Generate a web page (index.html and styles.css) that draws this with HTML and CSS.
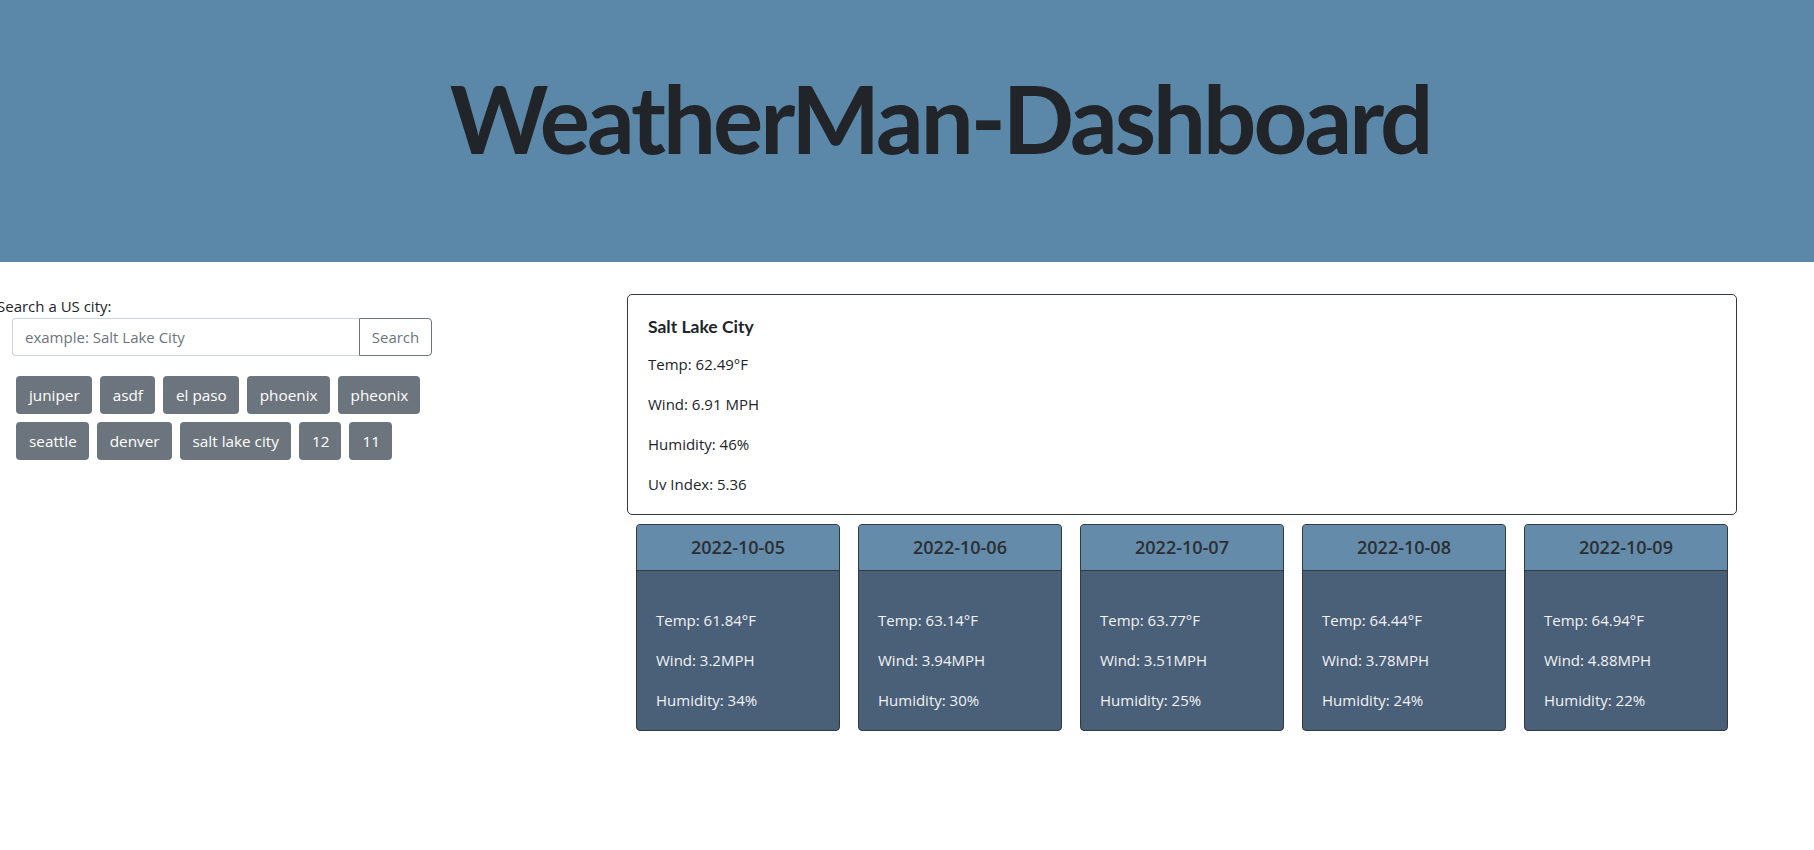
FILE: index.html
```html
<!DOCTYPE html>
<html lang="en">
<head>
<meta charset="utf-8">
<title>WeatherMan-Dashboard</title>
<link rel="stylesheet" href="styles.css">
</head>
<body>
<header class="hero">
  <h1 class="hero-title">WeatherMan-Dashboard</h1>
</header>
<main class="layout">
  <aside class="sidebar">
    <label class="search-label" for="city">Search a US city:</label>
    <div class="search-group">
      <input id="city" class="search-input" type="text" placeholder="example: Salt Lake City">
      <button class="search-btn" type="button">Search</button>
    </div>
    <div class="history">
      <button class="history-btn" type="button">juniper</button>
      <button class="history-btn" type="button">asdf</button>
      <button class="history-btn" type="button">el paso</button>
      <button class="history-btn" type="button">phoenix</button>
      <button class="history-btn" type="button">pheonix</button>
      <button class="history-btn" type="button">seattle</button>
      <button class="history-btn" type="button">denver</button>
      <button class="history-btn" type="button">salt lake city</button>
      <button class="history-btn" type="button">12</button>
      <button class="history-btn" type="button">11</button>
    </div>
  </aside>
  <section class="weather">
    <div class="current">
      <h5 class="current-title">Salt Lake City</h5>
      <p class="stat">Temp: 62.49°F</p>
      <p class="stat">Wind: 6.91 MPH</p>
      <p class="stat">Humidity: 46%</p>
      <p class="stat last">Uv Index: 5.36</p>
    </div>
    <div class="forecast">
      <div class="day">
        <div class="day-head">2022-10-05</div>
        <div class="day-body">
          <p class="stat">Temp: 61.84°F</p>
          <p class="stat">Wind: 3.2MPH</p>
          <p class="stat last">Humidity: 34%</p>
        </div>
      </div>
      <div class="day">
        <div class="day-head">2022-10-06</div>
        <div class="day-body">
          <p class="stat">Temp: 63.14°F</p>
          <p class="stat">Wind: 3.94MPH</p>
          <p class="stat last">Humidity: 30%</p>
        </div>
      </div>
      <div class="day">
        <div class="day-head">2022-10-07</div>
        <div class="day-body">
          <p class="stat">Temp: 63.77°F</p>
          <p class="stat">Wind: 3.51MPH</p>
          <p class="stat last">Humidity: 25%</p>
        </div>
      </div>
      <div class="day">
        <div class="day-head">2022-10-08</div>
        <div class="day-body">
          <p class="stat">Temp: 64.44°F</p>
          <p class="stat">Wind: 3.78MPH</p>
          <p class="stat last">Humidity: 24%</p>
        </div>
      </div>
      <div class="day">
        <div class="day-head">2022-10-09</div>
        <div class="day-body">
          <p class="stat">Temp: 64.94°F</p>
          <p class="stat">Wind: 4.88MPH</p>
          <p class="stat last">Humidity: 22%</p>
        </div>
      </div>
    </div>
  </section>
</main>
</body>
</html>
```
FILE: styles.css
```css
* { box-sizing: border-box; }
html, body { margin: 0; padding: 0; }
body {
  font-family: "Open Sans", "Noto Sans", sans-serif;
  font-size: 16px;
  line-height: 24px;
  color: #212529;
  background: #fff;
  overflow: hidden;
}
.hero {
  height: 262px;
  background: #5b88a8;
  display: flex;
  align-items: flex-start;
  justify-content: center;
  padding-left: 66px;
}
.hero-title {
  margin: 58px 0 0 0;
  font-family: Lato, sans-serif;
  font-weight: 700;
  font-size: 94px;
  line-height: 120px;
  letter-spacing: -3px;
  color: #212529;
}
.layout {
  display: flex;
  align-items: flex-start;
}
.sidebar {
  width: 627px;
  padding-top: 32px;
}
.search-label {
  display: block;
  margin-left: -3px;
  font-size: 15px;
  line-height: 24px;
}
.search-group {
  display: flex;
  margin: 0 0 16px 12px;
  width: 420px;
}
.search-input {
  width: 347px;
  height: 38px;
  padding: 6px 12px;
  border: 1px solid #ced4da;
  border-right: none;
  border-radius: 4px 0 0 4px;
  font-family: inherit;
  font-size: 15px;
  color: #495057;
}
.search-input::placeholder { color: #6c757d; }
.search-btn {
  width: 73px;
  height: 38px;
  border: 1px solid #6c757d;
  border-radius: 0 4px 4px 0;
  background: #fff;
  color: #6c757d;
  font-family: inherit;
  font-size: 15px;
  padding: 0;
}
.history {
  display: flex;
  flex-wrap: wrap;
  width: 430px;
  margin-left: 12px;
}
.history-btn {
  margin: 4px;
  height: 38px;
  padding: 0 12px 0 13px;
  border: none;
  border-radius: 4px;
  background: #6c757d;
  color: #fff;
  font-family: inherit;
  font-size: 15.3px;
}
.weather {
  width: 1110px;
  padding-top: 32px;
}
.current {
  border: 1px solid #343a40;
  border-radius: 5px;
  padding: 20px 20px 19px 20px;
  height: 221px;
}
.current-title {
  margin: 0 0 13px 0;
  font-family: Lato, sans-serif;
  font-weight: 700;
  font-size: 17.5px;
  line-height: 24px;
}
.stat {
  margin: 0 0 16px 0;
  font-size: 15px;
  line-height: 24px;
}
.stat.last { margin-bottom: 0; }
.forecast {
  display: flex;
  justify-content: space-between;
  padding: 9px 9px 0 9px;
}
.day {
  width: 204px;
  height: 207px;
  border: 1px solid #343a40;
  border-radius: 4px;
  overflow: hidden;
  background: #4a5f78;
}
.day-head {
  height: 46px;
  background: #648ba9;
  border-bottom: 1px solid #343a40;
  text-align: center;
  font-size: 18px;
  font-weight: 600;
  line-height: 44px;
  color: #2b2f33;
}
.day-body {
  padding: 37px 19px 0 19px;
  color: #f1f3f5;
}
```
